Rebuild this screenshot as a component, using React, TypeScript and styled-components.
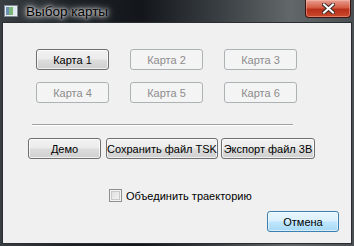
import React from "react";
import styled, { createGlobalStyle, css } from "styled-components";

const Global = createGlobalStyle`
  html, body { margin: 0; padding: 0; background: #1b2025; }
  body { font-family: "Liberation Sans", Arial, sans-serif; }
`;

const Window = styled.div`
  width: 354px;
  height: 246px;
  box-sizing: border-box;
  display: flex;
  flex-direction: column;
  background: linear-gradient(90deg, #3a3f44 0%, #1c2126 20%, #13171b 40%, #3a3f43 62%, #62676a 82%, #4a4f53 100%);
  padding: 0 2px 2px 2px;
`;

const TitleBar = styled.div`
  height: 22px;
  display: flex;
  align-items: center;
  position: relative;
  padding-left: 2px;
`;

const TitleText = styled.span`
  color: #000;
  font-size: 13.5px;
  margin-left: 8px;
  margin-top: 1px;
  text-shadow: 0 0 6px rgba(255,255,255,0.9), 0 0 3px rgba(255,255,255,0.9), 0 0 10px rgba(255,255,255,0.7);
`;

const CloseButton = styled.div`
  position: absolute;
  right: 1px;
  top: 0;
  width: 46px;
  height: 18px;
  box-sizing: border-box;
  border: 1px solid #3a1410;
  border-top: none;
  border-radius: 0 0 4px 4px;
  background: linear-gradient(180deg, #e8a092 0%, #d45b42 45%, #b8301a 55%, #c94a2c 100%);
  display: flex;
  align-items: center;
  justify-content: center;
  box-shadow: inset 0 0 0 1px rgba(255,200,190,0.4);
`;

const Client = styled.div`
  flex: 1;
  background: #f0f0f0;
  border: 1px solid #2a2e32;
  display: flex;
  flex-direction: column;
  padding: 26px 12px 11px 0;
`;

const MapGrid = styled.div`
  display: grid;
  grid-template-columns: repeat(3, 73px);
  grid-auto-rows: 21px;
  column-gap: 21px;
  row-gap: 12px;
  margin-left: 33px;
`;

const Btn = styled.button<{ $variant?: "normal" | "disabled" | "default"; $w: number; $ml?: number }>`
  width: ${(p) => p.$w}px;
  height: 21px;
  margin-left: ${(p) => p.$ml ?? 0}px;
  box-sizing: border-box;
  padding: 0;
  font-family: "Liberation Sans", Arial, sans-serif;
  font-size: 11px;
  border-radius: 3px;
  color: #000;
  border: 1px solid #707070;
  background: linear-gradient(180deg, #f2f2f2 0%, #ebebeb 48%, #dddddd 52%, #cfcfcf 100%);
  box-shadow: inset 0 0 0 1px rgba(255,255,255,0.7);
  white-space: nowrap;
  ${(p) =>
    p.$variant === "disabled" &&
    css`
      color: #8d8d8d;
      border-color: #adb2b5;
      background: #f4f4f4;
      box-shadow: none;
    `}
  ${(p) =>
    p.$variant === "default" &&
    css`
      border-color: #3c7fb1;
      background: linear-gradient(180deg, #eaf6fd 0%, #d9f0fc 48%, #bee6fd 52%, #a7d9f5 100%);
      box-shadow: inset 0 0 0 1px rgba(255,255,255,0.5);
    `}
`;

const Separator = styled.div`
  margin: 21px 0 0 29px;
  width: 261px;
  height: 1px;
  background: #a0a0a0;
  border-bottom: 1px solid #ffffff;
`;

const ActionRow = styled.div`
  display: flex;
  margin: 12px 0 0 25px;
`;

const CheckRow = styled.label`
  display: flex;
  align-items: center;
  margin: 30px 0 0 106px;
  font-size: 11px;
  color: #000;
  height: 13px;
`;

const CheckBox = styled.span`
  width: 13px;
  height: 13px;
  box-sizing: border-box;
  border: 1px solid #8e8f8f;
  background: linear-gradient(135deg, #dcdcdc 0%, #f6f6f6 100%);
  box-shadow: inset 0 0 0 1px #f4f4f4, inset 0 0 0 2px #c9c9c9;
  margin-right: 4px;
`;

const Footer = styled.div`
  display: flex;
  justify-content: flex-end;
  margin-top: 9px;
`;

export default function App() {
  return (
    <>
      <Global />
      <Window>
        <TitleBar>
          <svg width="14" height="12" viewBox="0 0 14 12">
            <rect x="0.5" y="0.5" width="13" height="11" fill="#e8eef2" stroke="#7d8a95" />
            <rect x="2" y="2" width="3" height="8" fill="#6a8fb0" />
            <rect x="5" y="2" width="4" height="8" fill="#7cb57a" />
            <rect x="9" y="2" width="3" height="8" fill="#dfe8ee" />
          </svg>
          <TitleText>Выбор карты</TitleText>
          <CloseButton>
            <svg width="13" height="11" viewBox="0 0 13 11">
              <path d="M2 1.5 L11 9.5 M11 1.5 L2 9.5" stroke="#3a2a28" strokeWidth="4" strokeLinecap="square" />
              <path d="M2 1.5 L11 9.5 M11 1.5 L2 9.5" stroke="#ffffff" strokeWidth="2" strokeLinecap="square" />
            </svg>
          </CloseButton>
        </TitleBar>
        <Client>
          <MapGrid>
            <Btn $w={73}>Карта 1</Btn>
            <Btn $w={73} $variant="disabled">Карта 2</Btn>
            <Btn $w={73} $variant="disabled">Карта 3</Btn>
            <Btn $w={73} $variant="disabled">Карта 4</Btn>
            <Btn $w={73} $variant="disabled">Карта 5</Btn>
            <Btn $w={73} $variant="disabled">Карта 6</Btn>
          </MapGrid>
          <Separator />
          <ActionRow>
            <Btn $w={73}>Демо</Btn>
            <Btn $w={112} $ml={5}>Сохранить файл TSK</Btn>
            <Btn $w={94} $ml={3}>Экспорт файл 3В</Btn>
          </ActionRow>
          <CheckRow>
            <CheckBox />
            Объединить траекторию
          </CheckRow>
          <Footer>
            <Btn $w={72} $variant="default">Отмена</Btn>
          </Footer>
        </Client>
      </Window>
    </>
  );
}
